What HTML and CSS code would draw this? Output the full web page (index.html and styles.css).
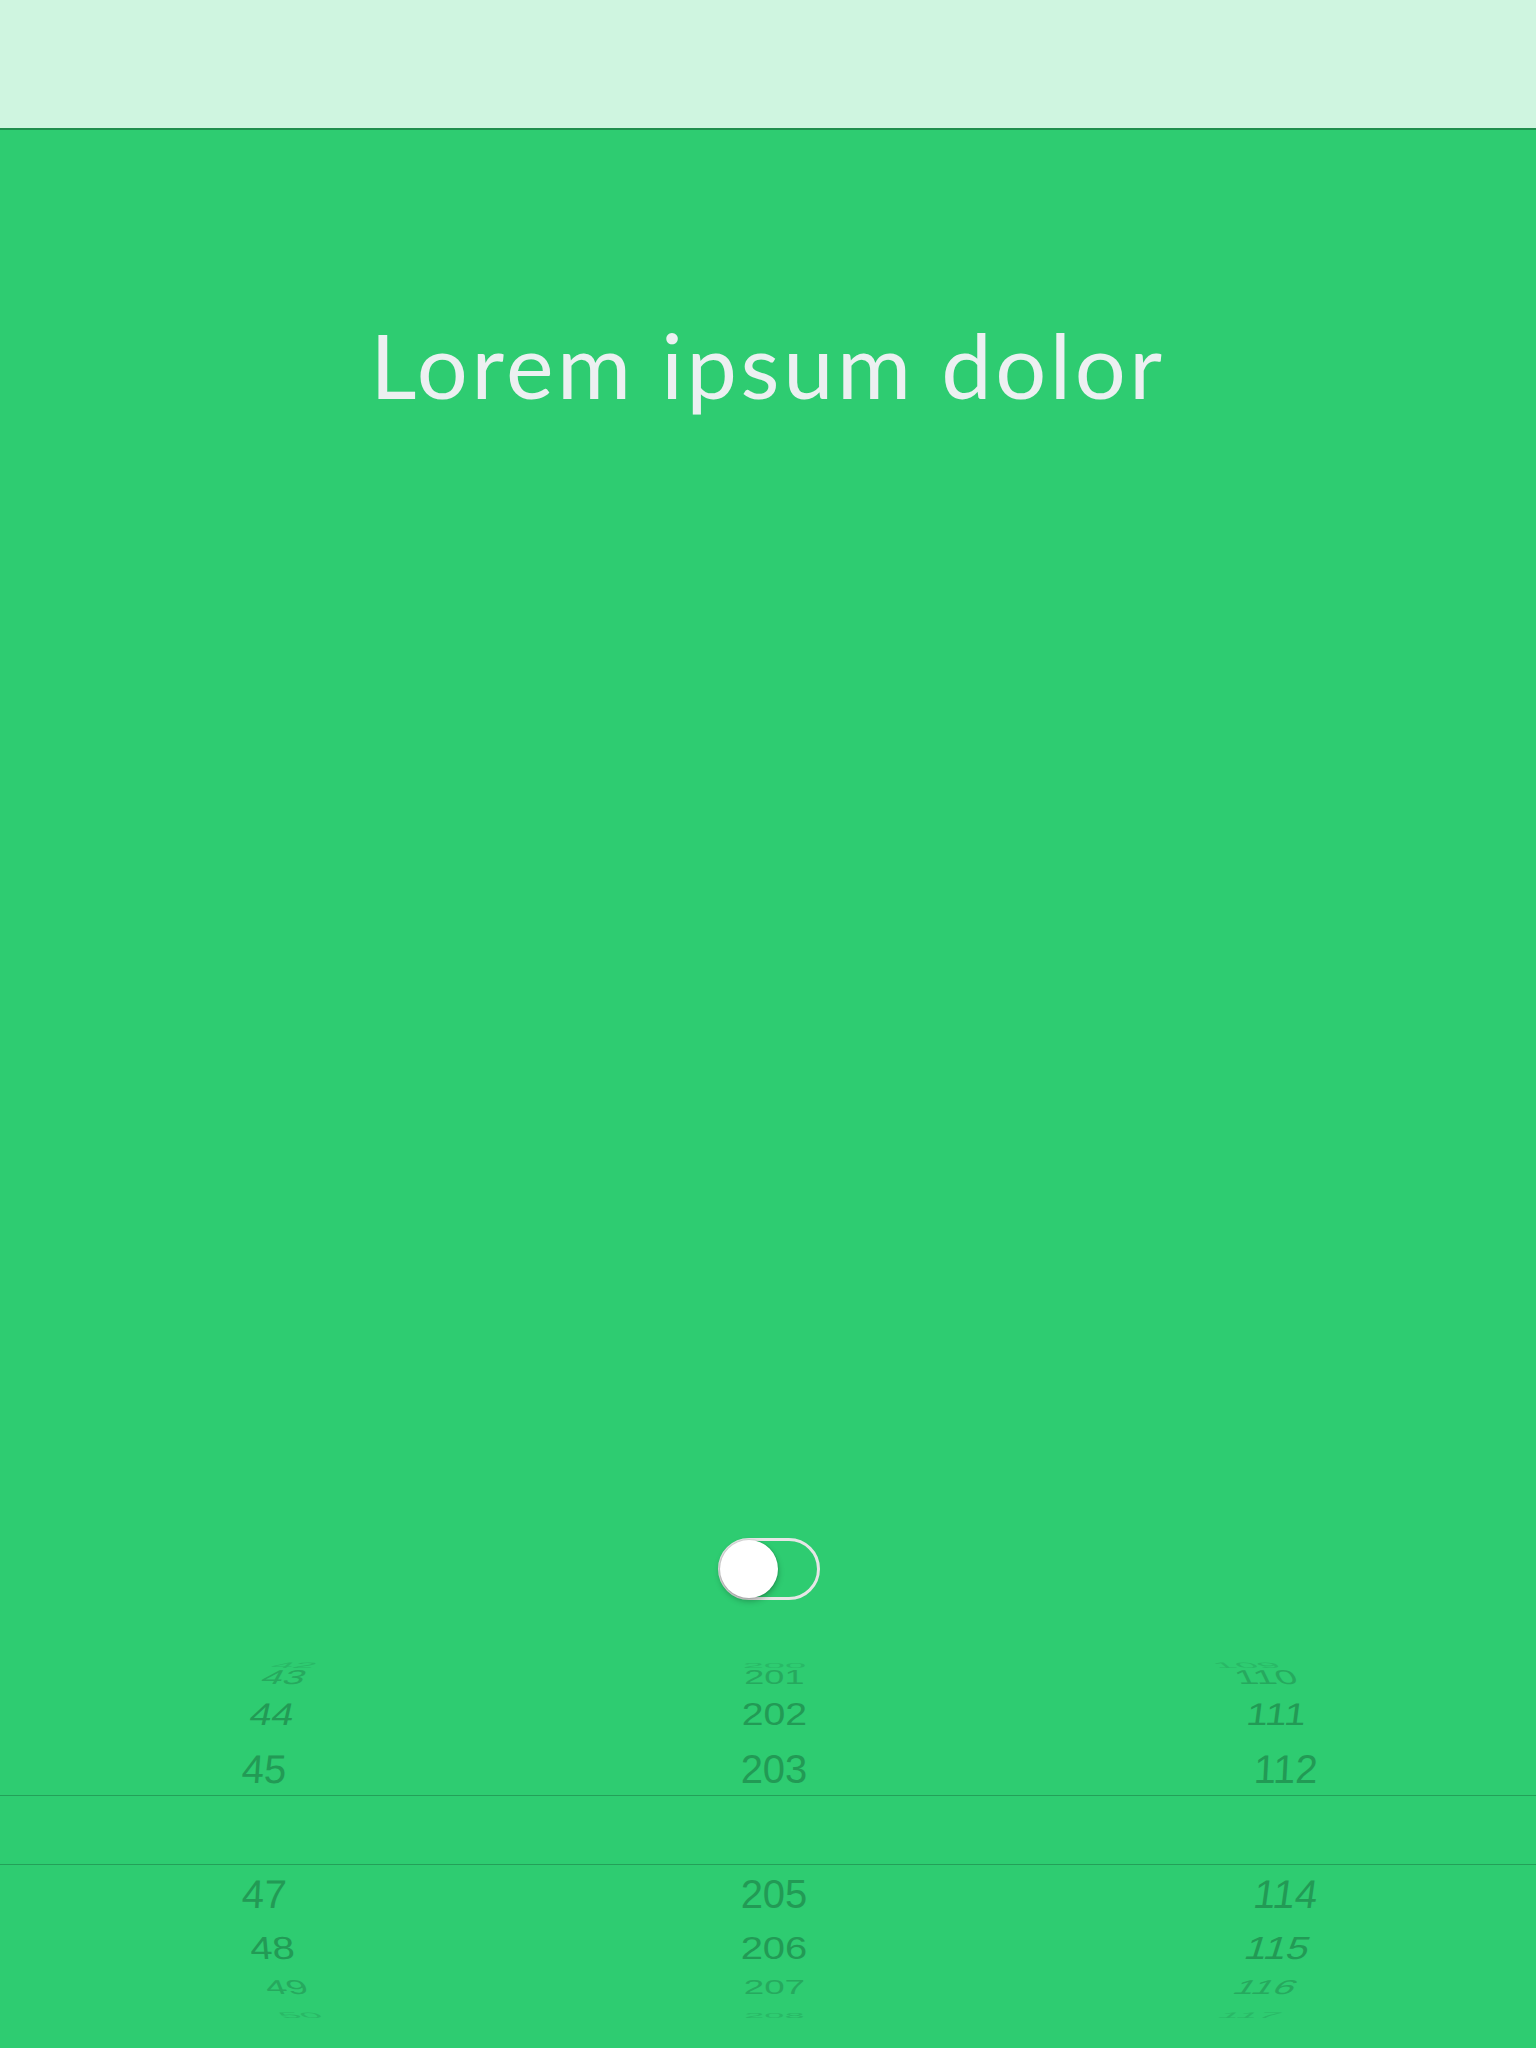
FILE: index.html
```html
<!DOCTYPE html>
<html>
<head>
<meta charset="utf-8">
<link rel="stylesheet" href="styles.css">
</head>
<body>
<header class="topbar"></header>
<main class="screen">
  <h1 class="title">Lorem ipsum dolor</h1>
  <div class="switch-wrap">
    <div class="switch"><div class="knob"></div></div>
  </div>
  <div class="picker">
    <div class="row r-a"><span class="c1"><i>42</i></span><span class="c2"><i>200</i></span><span class="c3"><i>109</i></span></div>
    <div class="row r-b"><span class="c1"><i>43</i></span><span class="c2"><i>201</i></span><span class="c3"><i>110</i></span></div>
    <div class="row r-c"><span class="c1"><i>44</i></span><span class="c2"><i>202</i></span><span class="c3"><i>111</i></span></div>
    <div class="row r-d"><span class="c1"><i>45</i></span><span class="c2"><i>203</i></span><span class="c3"><i>112</i></span></div>
    <div class="band"></div>
    <div class="row r-e"><span class="c1"><i>47</i></span><span class="c2"><i>205</i></span><span class="c3"><i>114</i></span></div>
    <div class="row r-f"><span class="c1"><i>48</i></span><span class="c2"><i>206</i></span><span class="c3"><i>115</i></span></div>
    <div class="row r-g"><span class="c1"><i>49</i></span><span class="c2"><i>207</i></span><span class="c3"><i>116</i></span></div>
    <div class="row r-h"><span class="c1"><i>50</i></span><span class="c2"><i>208</i></span><span class="c3"><i>117</i></span></div>
  </div>
</main>
</body>
</html>
```
FILE: styles.css
```css
html, body {
  margin: 0;
  padding: 0;
}
body {
  width: 1536px;
  height: 2048px;
  background: #2ecc71;
  font-family: "Liberation Sans", Arial, sans-serif;
  overflow: hidden;
}
.topbar {
  height: 128px;
  background: #cff5e0;
  border-bottom: 2px solid #1f8f4e;
}
.screen {
  display: flex;
  flex-direction: column;
  align-items: stretch;
}
.title {
  margin: 174px 0 0 0;
  height: 120px;
  line-height: 120px;
  text-align: center;
  font-family: "Lato", "DejaVu Sans", sans-serif;
  font-weight: 400;
  font-size: 90px;
  letter-spacing: 3.6px;
  color: #ecf0f1;
}
.switch-wrap {
  display: flex;
  justify-content: center;
  margin-top: 1114px;
  padding-left: 2px;
}
.switch {
  width: 102px;
  height: 62px;
  box-sizing: border-box;
  border: 3px solid #e6e6e6;
  border-radius: 31px;
  display: flex;
  align-items: center;
}
.knob {
  width: 58px;
  height: 58px;
  margin-left: -1px;
  border-radius: 50%;
  background: #ffffff;
  box-shadow: 0 3px 6px rgba(0, 0, 0, 0.28), 0 0 0 1px rgba(0, 0, 0, 0.06);
}
.picker {
  margin-top: 48px;
  height: 362px;
  display: flex;
  flex-direction: column;
}
.row {
  display: grid;
  grid-template-columns: 528px 492px 516px;
  align-items: center;
  font-size: 40px;
  color: #229a55;
  flex-shrink: 0;
}
.row span {
  display: flex;
  justify-content: center;
  align-items: center;
  height: 100%;
}
.row .c3 {
  padding-left: 16px;
}
.row i {
  font-style: normal;
  display: inline-block;
  line-height: 1;
  white-space: nowrap;
}
.r-a { height: 14px; color: #29b866; }
.r-b { height: 24px; color: #26a95e; }
.r-c { height: 56px; }
.r-d { height: 53px; }
.band {
  height: 70px;
  box-sizing: border-box;
  border-top: 1px solid #23a058;
  border-bottom: 1px solid #23a058;
  flex-shrink: 0;
}
.r-e { height: 58px; }
.r-f { height: 50px; }
.r-g { height: 26px; color: #26a95e; }
.r-h { height: 11px; color: #29b866; }

.r-a .c1 i { transform: translate(30px, -3px) scale(0.98, 0.2) skewX(-14deg); }
.r-a .c2 i { transform: translateY(-3px) scale(0.95, 0.2); }
.r-a .c3 i { transform: translate(-40px, -3px) scale(0.98, 0.2) skewX(14deg); }

.r-b .c1 i { transform: translate(20px, -5px) scale(0.96, 0.5) skewX(-16deg); }
.r-b .c2 i { transform: translateY(-5px) scale(0.9, 0.5); }
.r-b .c3 i { transform: translate(-20px, -5px) scale(0.96, 0.5) skewX(14deg); }

.r-c .c1 i { transform: translateX(8px) scale(0.98, 0.78) skewX(-10deg); }
.r-c .c2 i { transform: scale(0.98, 0.78); }
.r-c .c3 i { transform: translateX(-10px) scale(0.98, 0.78) skewX(-6deg); }

.r-d .c1 i { transform: skewX(-4deg); }
.r-d .c2 i { transform: none; }
.r-d .c3 i { transform: skewX(-3deg); }

.r-e .c1 i { transform: skewX(-3deg); }
.r-e .c2 i { transform: none; }
.r-e .c3 i { transform: skewX(-8deg); }

.r-f .c1 i { transform: translateX(8px) scale(1, 0.8) skewX(4deg); }
.r-f .c2 i { transform: scale(1, 0.8); }
.r-f .c3 i { transform: translateX(-8px) scale(1, 0.8) skewX(-14deg); }

.r-g .c1 i { transform: translate(22px, -6px) scale(0.95, 0.5) skewX(12deg); }
.r-g .c2 i { transform: translateY(-6px) scale(0.92, 0.5); }
.r-g .c3 i { transform: translate(-20px, -6px) scale(0.95, 0.5) skewX(-20deg); }

.r-h .c1 i { transform: translate(36px, -4px) scale(0.95, 0.2) skewX(14deg); }
.r-h .c2 i { transform: translateY(-4px) scale(0.9, 0.2); }
.r-h .c3 i { transform: translate(-36px, -4px) scale(0.95, 0.2) skewX(-16deg); }
```
